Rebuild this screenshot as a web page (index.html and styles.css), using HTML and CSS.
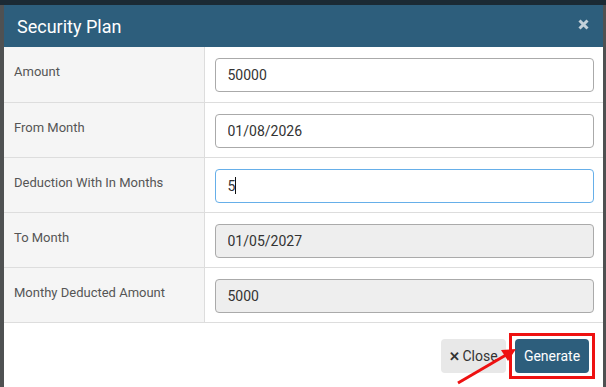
FILE: index.html
```html
<!DOCTYPE html>
<html lang="en">
  <head>
    <meta charset="UTF-8" />
    <meta name="viewport" content="width=device-width, initial-scale=1.0" />
    <title>Security Plan</title>
    <link rel="stylesheet" href="styles.css">
  </head>
  <body>
    <div class="modal">
      <div class="modal-header">
        <h4>Security Plan</h4>
        <svg class="close-x" width="11" height="11" viewBox="0 0 11 11">
          <path d="M1.5 1.5 L9.5 9.5 M9.5 1.5 L1.5 9.5" stroke="#c3d0d9" stroke-width="3" />
        </svg>
      </div>

      <table class="plan">
        <tr>
          <td class="label">Amount</td>
          <td class="field"><input type="text" value="50000" /></td>
        </tr>
        <tr>
          <td class="label">From Month</td>
          <td class="field"><input type="text" value="01/08/2026" /></td>
        </tr>
        <tr>
          <td class="label">Deduction With In Months</td>
          <td class="field">
            <div class="fake-input focus">5<span class="caret"></span></div>
          </td>
        </tr>
        <tr>
          <td class="label">To Month</td>
          <td class="field"><input type="text" value="01/05/2027" disabled /></td>
        </tr>
        <tr>
          <td class="label">Monthy Deducted Amount</td>
          <td class="field"><input type="text" value="5000" disabled /></td>
        </tr>
      </table>

      <div class="modal-footer">
        <button class="btn-close"><b>&#10005;</b>Close</button>
        <span class="highlight">
          <button class="btn-generate">Generate</button>
        </span>
      </div>
    </div>

    <!-- annotation arrow -->
    <svg class="arrow" width="606" height="387" viewBox="0 0 606 387">
      <line x1="458" y1="383" x2="506" y2="355" stroke="#ee1111" stroke-width="3" />
      <polygon points="516,349 501,350 508,361" fill="#ee1111" />
    </svg>
  </body>
</html>
```

FILE: styles.css
```css
* {
  box-sizing: border-box;
  margin: 0;
  padding: 0;
}

html,
body {
  height: 100%;
  overflow: hidden;
}

body {
  font-family: Roboto, "Liberation Sans", sans-serif;
  background: linear-gradient(#1b2a34 0 5px, #4f5152 5px);
  padding: 5px 0 0 4px;
  position: relative;
}

.modal {
  width: 599px;
  background-color: #ffffff;
  min-height: 400px;
}

.modal-header {
  height: 42px;
  display: flex;
  align-items: center;
  justify-content: space-between;
  padding: 0 14px 0 13px;
  background-color: #2d5e7c;
}

.modal-header h4 {
  font-size: 18px;
  font-weight: 400;
  color: #ffffff;
}

.close-x {
  margin-top: -4px;
}

.plan {
  width: 100%;
  border-collapse: collapse;
}

.plan tr {
  border-bottom: 1px solid #dddddd;
}

.plan td {
  height: 55px;
}

.label {
  width: 200px;
  background-color: #f5f5f5;
  border-right: 1px solid #dddddd;
  padding: 17px 10px 0;
  vertical-align: top;
  font-size: 13px;
  color: #555555;
}

.field {
  padding: 11px 9px 9px 10px;
  vertical-align: top;
}

.field input,
.fake-input {
  display: block;
  width: 100%;
  height: 34px;
  padding: 0 12px;
  border: 1px solid #aaaaaa;
  border-radius: 4px;
  font-family: inherit;
  font-size: 14px;
  color: #333333;
  background-color: #ffffff;
}

.field input:disabled {
  background-color: #eeeeee;
  color: #333333;
}

.fake-input {
  display: flex;
  align-items: center;
}

.fake-input.focus {
  border-color: #66afe9;
}

.caret {
  display: inline-block;
  width: 1px;
  height: 17px;
  background-color: #111111;
}

.modal-footer {
  display: flex;
  justify-content: flex-end;
  align-items: center;
  gap: 3px;
  padding: 10px 8px;
}

button {
  height: 34px;
  border: none;
  border-radius: 4px;
  font-family: inherit;
  font-size: 14px;
  cursor: pointer;
}

.btn-close {
  width: 65px;
  background-color: #e8e8e8;
  color: #333333;
}

.btn-close b {
  font-size: 13px;
  margin-right: 2px;
}

.highlight {
  display: block;
  border: 3px solid #ee1111;
  padding: 3px;
}

.btn-generate {
  display: block;
  width: 74px;
  background-color: #2d5e7c;
  color: #ffffff;
}

.arrow {
  position: absolute;
  left: 0;
  top: 0;
  pointer-events: none;
}
```
